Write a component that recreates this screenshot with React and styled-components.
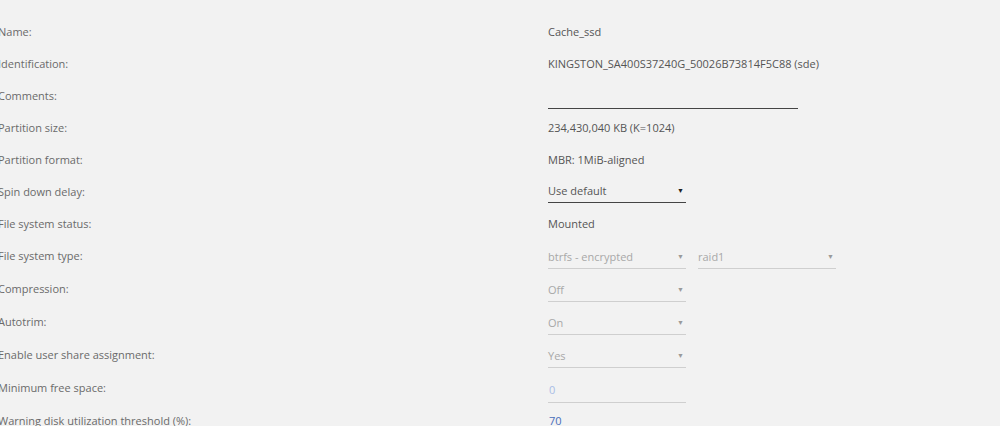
import React from 'react'
import styled, { createGlobalStyle } from 'styled-components'

const GlobalStyle = createGlobalStyle`
  html, body {
    margin: 0;
    padding: 0;
    background: #f2f2f2;
  }
  body {
    font-family: 'Open Sans', 'Liberation Sans', sans-serif;
    font-size: 11px;
    color: #555555;
  }
`

const Form = styled.div`
  margin-left: -2px;
  padding-top: 15px;
  width: 1002px;
`

const Row = styled.div`
  display: grid;
  grid-template-columns: 550px 1fr;
  align-items: center;
  height: ${({ $tall }) => ($tall ? 33 : 32)}px;
`

const Label = styled.div`
  color: #6a6a6a;
  white-space: nowrap;
`

const Value = styled.div`
  display: flex;
  align-items: center;
  gap: 12px;
  color: #555555;
  white-space: nowrap;
`

const TextLine = styled.div`
  width: ${({ $width }) => $width || 250}px;
  height: 20px;
  box-sizing: border-box;
  border-bottom: 1px solid #444444;
  margin-top: 7px;
`

const SelectBox = styled.div`
  box-sizing: border-box;
  width: ${({ $width }) => $width || 138}px;
  height: ${({ $disabled }) => ($disabled ? 24 : 23)}px;
  display: flex;
  align-items: center;
  justify-content: space-between;
  padding-right: 2px;
  margin-top: ${({ $disabled }) => ($disabled ? '2px' : '0')};
  border-bottom: 1px solid ${({ $disabled }) => ($disabled ? '#cfcfcf' : '#444444')};
  color: ${({ $disabled }) => ($disabled ? '#a8a8a8' : '#555555')};
`

const Arrow = styled.span`
  font-size: 7px;
  color: ${({ $disabled }) => ($disabled ? '#9a9a9a' : '#222222')};
`

const NumberInput = styled.div`
  box-sizing: border-box;
  width: ${({ $width }) => $width || 138}px;
  height: 24px;
  display: flex;
  align-items: center;
  padding-left: 1px;
  margin-top: ${({ $line }) => ($line ? '6px' : '0')};
  padding-bottom: ${({ $line }) => ($line ? '2px' : '0')};
  border-bottom: ${({ $line }) => ($line ? '1px solid #cfcfcf' : 'none')};
  color: ${({ $light }) => ($light ? '#a9bde6' : '#486dba')};
`

const Select = ({ value, width, disabled }) => (
  <SelectBox $width={width} $disabled={disabled}>
    <span>{value}</span>
    <Arrow $disabled={disabled}>▼</Arrow>
  </SelectBox>
)

export default function App() {
  return (
    <>
      <GlobalStyle />
      <Form>
        <Row>
          <Label>Name:</Label>
          <Value>Cache_ssd</Value>
        </Row>
        <Row>
          <Label>Identification:</Label>
          <Value>KINGSTON_SA400S37240G_50026B73814F5C88 (sde)</Value>
        </Row>
        <Row>
          <Label>Comments:</Label>
          <Value>
            <TextLine $width={250} />
          </Value>
        </Row>
        <Row>
          <Label>Partition size:</Label>
          <Value>234,430,040 KB (K=1024)</Value>
        </Row>
        <Row>
          <Label>Partition format:</Label>
          <Value>MBR: 1MiB-aligned</Value>
        </Row>
        <Row>
          <Label>Spin down delay:</Label>
          <Value>
            <Select value="Use default" />
          </Value>
        </Row>
        <Row>
          <Label>File system status:</Label>
          <Value>Mounted</Value>
        </Row>
        <Row $tall>
          <Label>File system type:</Label>
          <Value>
            <Select value="btrfs - encrypted" disabled />
            <Select value="raid1" disabled />
          </Value>
        </Row>
        <Row $tall>
          <Label>Compression:</Label>
          <Value>
            <Select value="Off" disabled />
          </Value>
        </Row>
        <Row $tall>
          <Label>Autotrim:</Label>
          <Value>
            <Select value="On" disabled />
          </Value>
        </Row>
        <Row $tall>
          <Label>Enable user share assignment:</Label>
          <Value>
            <Select value="Yes" disabled />
          </Value>
        </Row>
        <Row $tall>
          <Label>Minimum free space:</Label>
          <Value>
            <NumberInput $line $light>0</NumberInput>
          </Value>
        </Row>
        <Row $tall>
          <Label>Warning disk utilization threshold (%):</Label>
          <Value>
            <NumberInput>70</NumberInput>
          </Value>
        </Row>
      </Form>
    </>
  )
}
